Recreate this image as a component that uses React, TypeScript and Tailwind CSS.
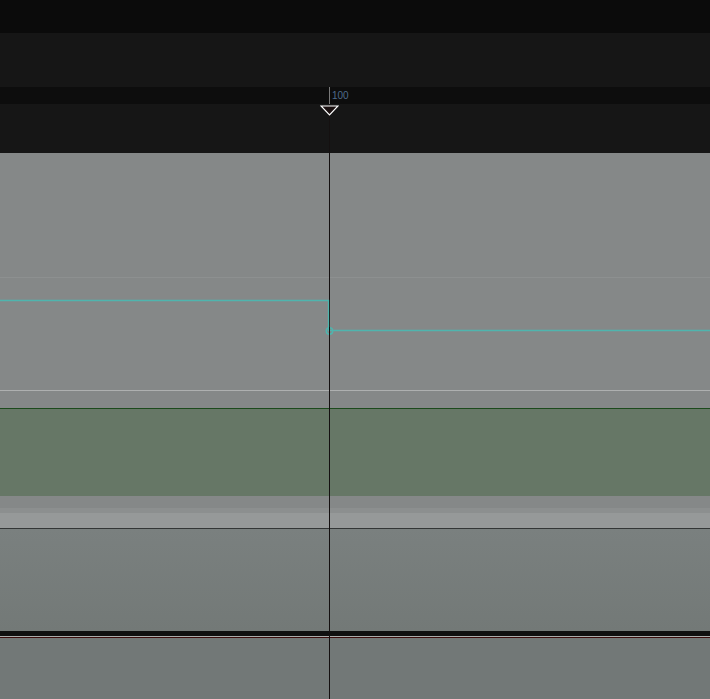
export default function App() {
  return (
    <div className="relative w-[710px] h-[699px] overflow-hidden bg-[#727877]" style={{ fontFamily: '"Liberation Sans", Arial, sans-serif' }}>
      {/* header bands */}
      <div className="h-[33px] bg-[#0b0b0b]" />
      <div className="h-[54px] bg-[#161616]" />
      <div className="h-[17px] bg-[#0d0d0d]" />
      <div className="h-[49px] bg-[#161616]" />

      {/* automation lane */}
      <div className="flex flex-col bg-[#858888]">
        <div className="h-[124px]" />
        <div className="h-px bg-[#8d9090]" />
        <div className="h-[112px]" />
        <div className="h-px bg-[#aeb0b0]" />
        <div className="h-[17px]" />
        <div className="h-px bg-[#1c4a1c]" />
        <div className="h-[87px] bg-[#667766]" />
        <div className="h-[12px]" />
        <div className="h-[5px] bg-[#8c8f8f]" />
        <div className="h-[15px] bg-[#969999]" />
        <div className="h-px bg-[#333636]" />
      </div>

      {/* lower track */}
      <div className="h-[102px] bg-gradient-to-b from-[#7a807f] to-[#737977]" />
      <div className="h-[5px] bg-[#101010]" />
      <div className="h-px bg-[#a9acab]" />
      <div className="h-px bg-[#3a0c0c]" />
      <div className="h-[61px] bg-[#727877]" />

      {/* playhead line */}
      <div className="absolute left-[329px] top-[87px] w-px h-[17px] bg-[#7a7a7a]" />
      <span className="absolute left-[332px] top-[90px] text-[10px] leading-[12px] text-[#4d6b8c]">100</span>
      <div className="absolute left-[329px] top-[115px] w-px h-[584px] bg-[#141010]" />

      {/* automation curve */}
      <svg className="absolute left-0 top-0 pointer-events-none" width="710" height="699">
        <path d="M0 300.5 H328.5 V330.5 H710" fill="none" stroke="#4fb5ae" strokeWidth="1.3" />
        <circle cx="329.5" cy="331" r="3.2" fill="none" stroke="#4fb5ae" strokeWidth="1.5" />
        <line x1="329.5" y1="327" x2="329.5" y2="335" stroke="#141010" strokeWidth="1" />
      </svg>

      <svg className="absolute left-[320px] top-[105px]" width="19" height="11">
        <path d="M1 1 H18 L9.5 10 Z" fill="#1a1010" stroke="#ffffff" strokeWidth="1.2" />
      </svg>
    </div>
  );
}
